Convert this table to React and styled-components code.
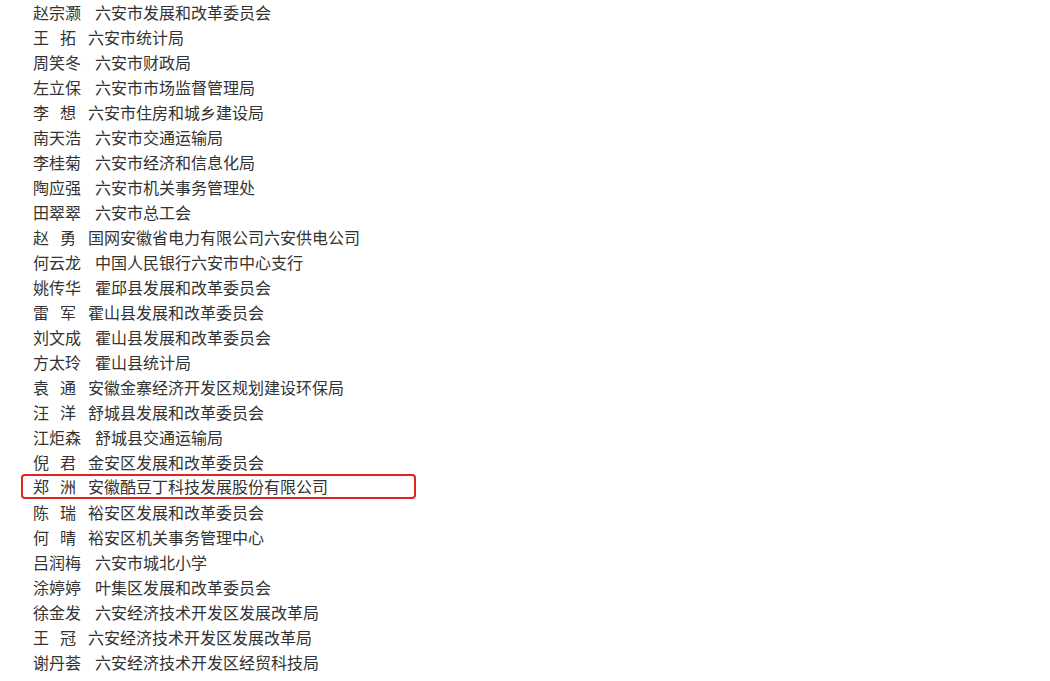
import React from 'react';
import styled, { createGlobalStyle } from 'styled-components';

const GlobalStyle = createGlobalStyle`
  html, body {
    margin: 0;
    padding: 0;
    background: #fff;
  }
  body {
    font-family: "Microsoft YaHei", "Noto Sans CJK SC", "Noto Sans", sans-serif;
  }
`;

const List = styled.div`
  padding: 0 0 0 21px;
  width: 1029px;
  height: 681px;
  overflow: hidden;
`;

const Row = styled.div`
  box-sizing: border-box;
  display: flex;
  align-items: center;
  width: 395px;
  height: 25px;
  padding-left: 10px;
  font-size: 16px;
  line-height: 25px;
  color: #333;
  white-space: nowrap;
  border: 2px solid ${(p) => (p.$highlight ? '#e2231f' : 'transparent')};
  border-radius: 4px;
  margin: ${(p) => (p.$highlight ? '-1px 0 1px' : '0')};
`;

const Name = styled.span`
  display: inline-flex;
  gap: 11px;
  margin-right: ${(p) => (p.$short ? '12px' : '14px')};
`;

const Org = styled.span``;

const people = [
  ['赵宗灏', '六安市发展和改革委员会'],
  ['王拓', '六安市统计局'],
  ['周笑冬', '六安市财政局'],
  ['左立保', '六安市市场监督管理局'],
  ['李想', '六安市住房和城乡建设局'],
  ['南天浩', '六安市交通运输局'],
  ['李桂菊', '六安市经济和信息化局'],
  ['陶应强', '六安市机关事务管理处'],
  ['田翠翠', '六安市总工会'],
  ['赵勇', '国网安徽省电力有限公司六安供电公司'],
  ['何云龙', '中国人民银行六安市中心支行'],
  ['姚传华', '霍邱县发展和改革委员会'],
  ['雷军', '霍山县发展和改革委员会'],
  ['刘文成', '霍山县发展和改革委员会'],
  ['方太玲', '霍山县统计局'],
  ['袁通', '安徽金寨经济开发区规划建设环保局'],
  ['汪洋', '舒城县发展和改革委员会'],
  ['江炬森', '舒城县交通运输局'],
  ['倪君', '金安区发展和改革委员会'],
  ['郑洲', '安徽酷豆丁科技发展股份有限公司', true],
  ['陈瑞', '裕安区发展和改革委员会'],
  ['何晴', '裕安区机关事务管理中心'],
  ['吕润梅', '六安市城北小学'],
  ['涂婷婷', '叶集区发展和改革委员会'],
  ['徐金发', '六安经济技术开发区发展改革局'],
  ['王冠', '六安经济技术开发区发展改革局'],
  ['谢丹荟', '六安经济技术开发区经贸科技局'],
];

function NameCell({ name }) {
  const short = name.length === 2;
  const chars = short ? name.split('') : [name];
  return (
    <Name $short={short}>
      {chars.map((c, i) => (
        <span key={i}>{c}</span>
      ))}
    </Name>
  );
}

export default function App() {
  return (
    <>
      <GlobalStyle />
      <List>
        {people.map(([name, org, hl]) => (
          <Row key={name + org} $highlight={hl}>
            <NameCell name={name} />
            <Org>{org}</Org>
          </Row>
        ))}
      </List>
    </>
  );
}
